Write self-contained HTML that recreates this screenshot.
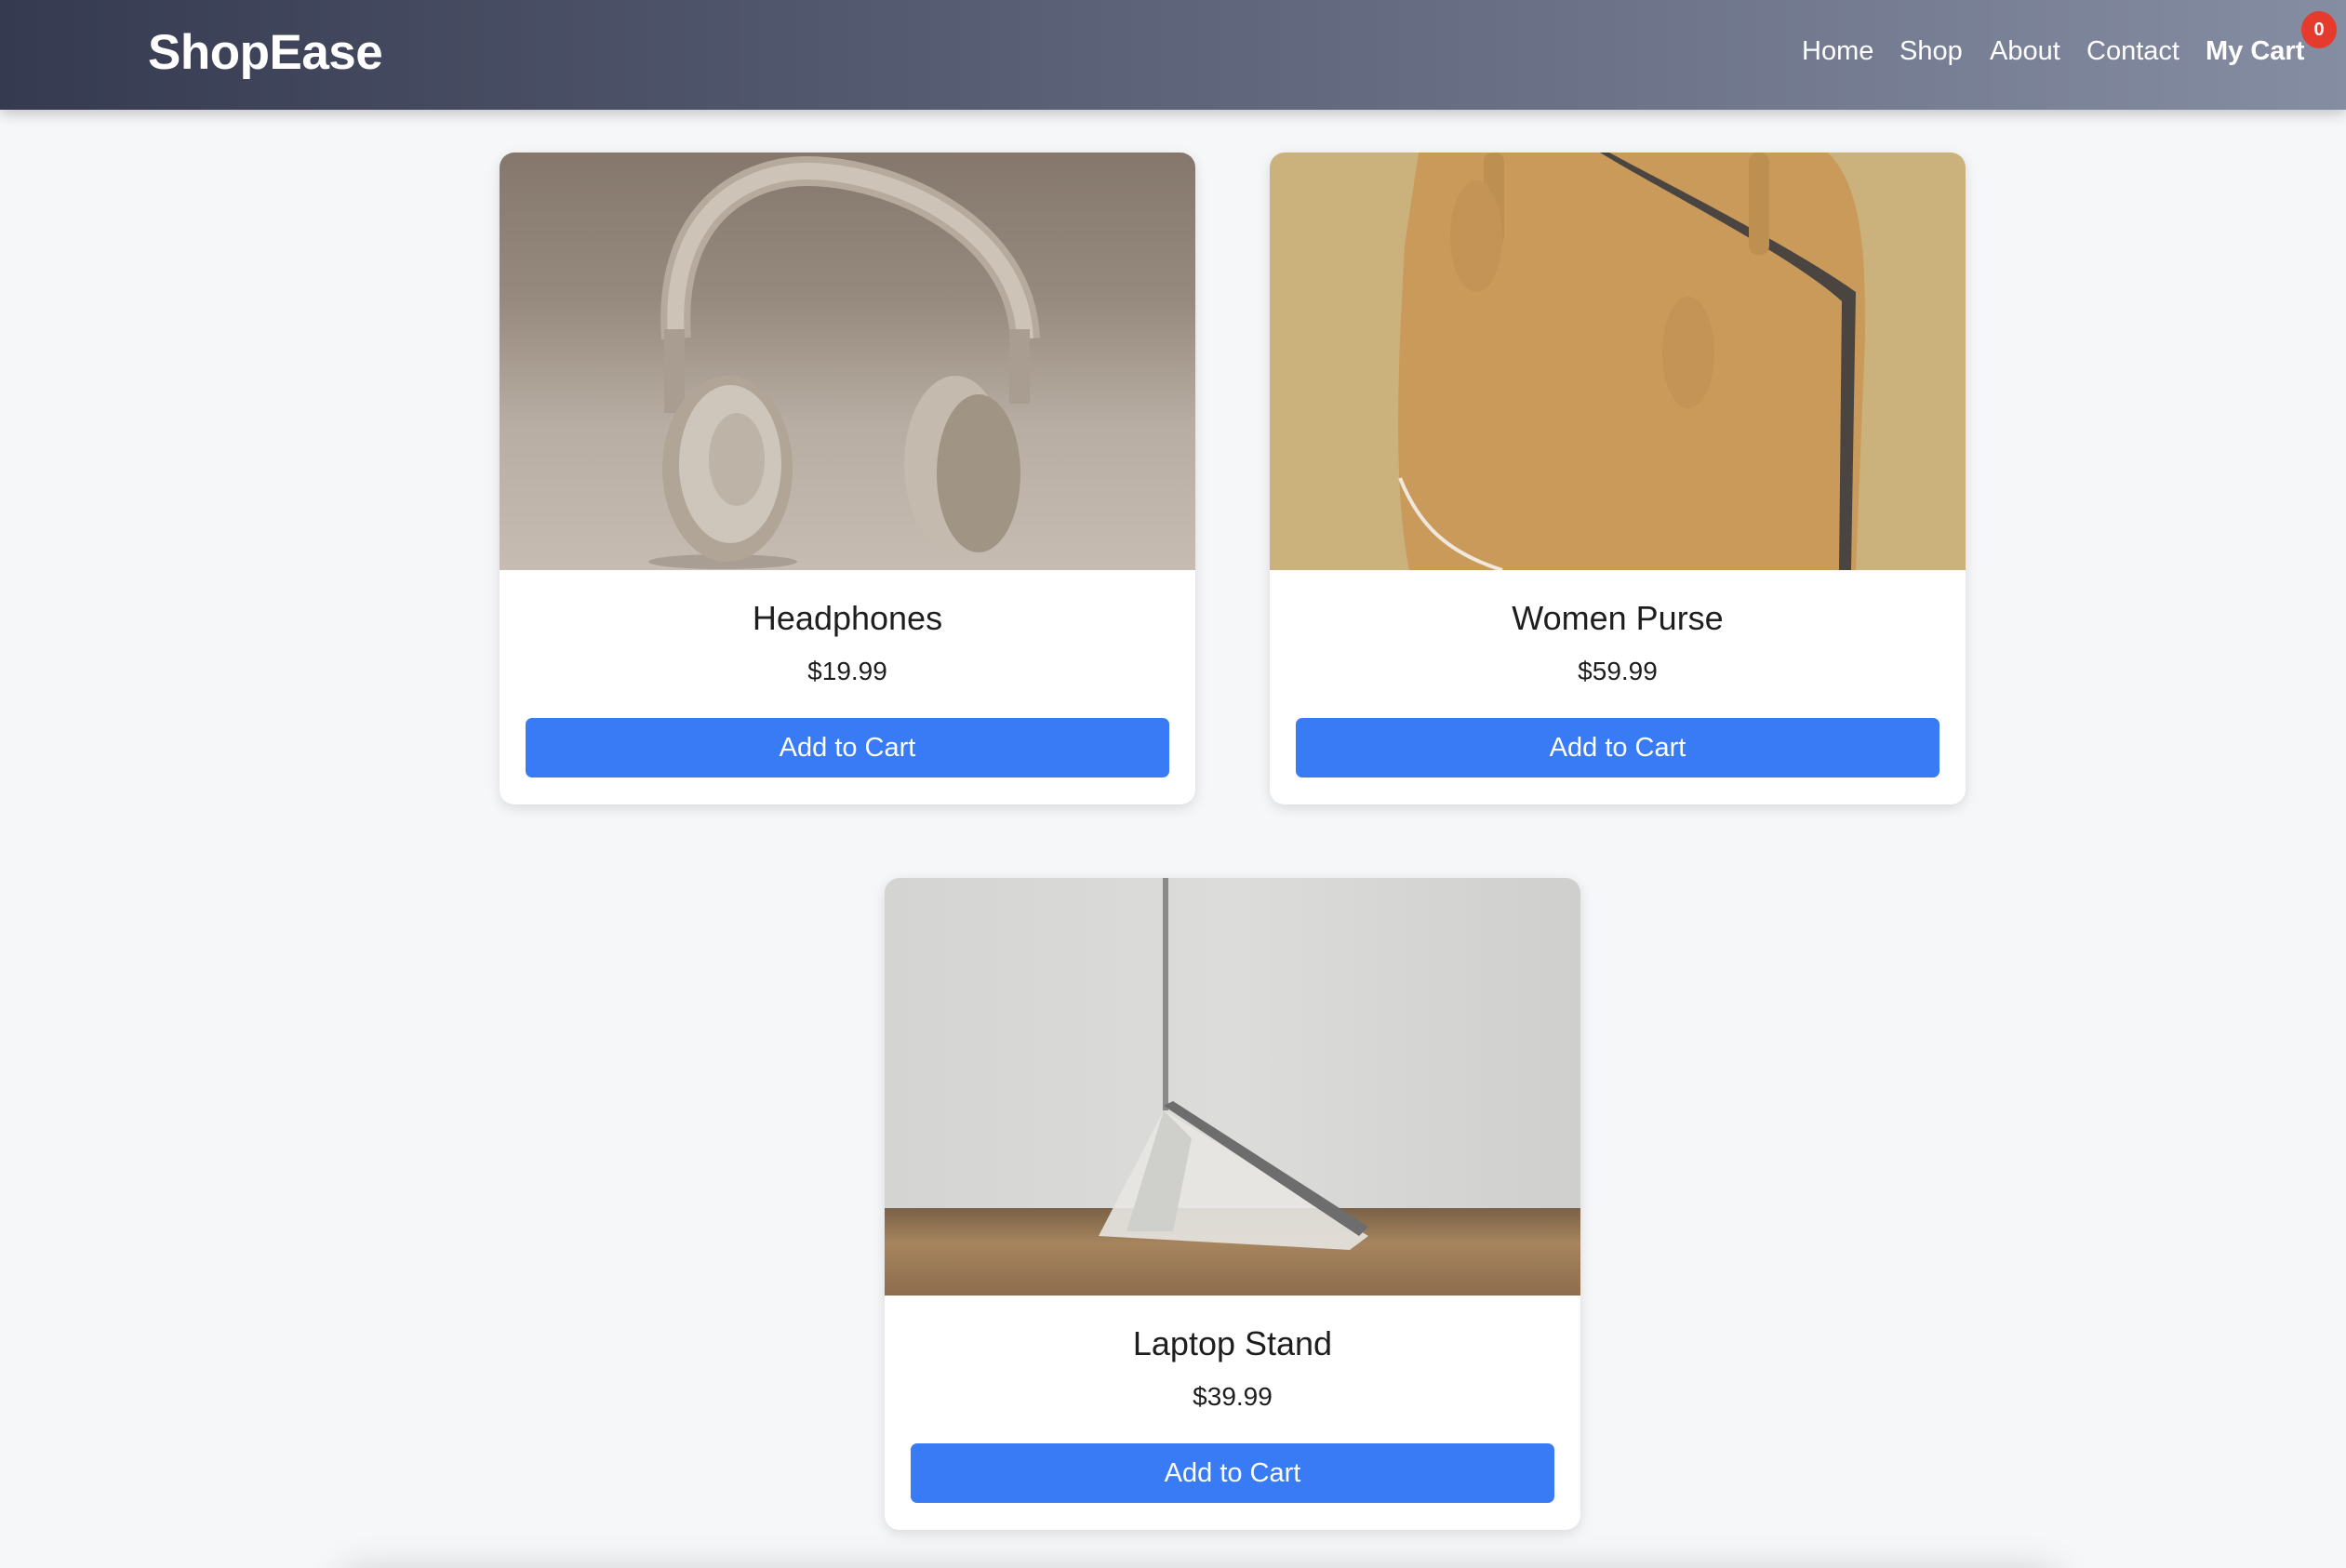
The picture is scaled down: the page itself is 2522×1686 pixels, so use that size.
<!DOCTYPE html>
<html><head><meta charset="utf-8"><style>
*{margin:0;padding:0;box-sizing:border-box}
html,body{width:2522px;height:1686px;overflow:hidden;background:#f6f7f9;font-family:"Liberation Sans",Arial,sans-serif}
#wrap{position:relative;width:2522px;height:1686px;overflow:hidden}
.hdr{position:absolute;left:0;top:0;width:2522px;height:118px;background:linear-gradient(90deg,#353a50,#5a6075 45%,#858da3);box-shadow:0 4px 14px rgba(0,0,0,.22);z-index:2}
.logo{position:absolute;left:159px;top:26px;color:#fff;font-weight:bold;font-size:53px;letter-spacing:-0.5px}
.nav{position:absolute;top:39px;color:#fff;font-size:29px}
.badge{position:absolute;left:2474px;top:12px;width:38px;height:40px;border-radius:50%;background:#e53b2c;color:#fff;font-size:20px;font-weight:bold;text-align:center;line-height:40px}
.card{position:absolute;width:748px;height:701px;background:#fff;border-radius:16px;box-shadow:0 4px 14px rgba(0,0,0,.12);overflow:hidden}
.img{height:449px;position:relative;overflow:hidden}
.t{position:absolute;top:480px;width:100%;text-align:center;font-size:36px;color:#1e1e1e}
.p{position:absolute;top:542px;width:100%;text-align:center;font-size:28px;color:#1e1e1e}
.b{position:absolute;left:28px;top:608px;width:692px;height:64px;background:#387bf5;border-radius:7px;color:#fff;font-size:29px;text-align:center;line-height:64px}
.foot{position:absolute;left:370px;top:1700px;width:1840px;height:60px;box-shadow:0 -10px 40px rgba(0,0,0,.18);background:#e4e5e7}
</style></head><body><div id="wrap">
<div class="hdr">
<div class="logo">ShopEase</div>
<div class="nav" style="left:1937px">Home</div>
<div class="nav" style="left:2042px">Shop</div>
<div class="nav" style="left:2139px">About</div>
<div class="nav" style="left:2243px">Contact</div>
<div class="nav" style="left:2371px;font-weight:bold">My Cart</div>
<div class="badge">0</div>
</div>

<div class="card" style="left:537px;top:164px">
<div class="img" style="background:linear-gradient(180deg,#85776b 0%,#968a7e 35%,#b8ada2 65%,#c6bcb2 100%)">
<svg width="748" height="449" viewBox="0 0 748 449">
<ellipse cx="240" cy="440" rx="80" ry="8" fill="#7f7468" opacity=".4"/>
<path d="M190 200 C180 60 270 20 330 20 C420 20 560 80 565 200" fill="none" stroke="#b5aa9c" stroke-width="32"/>
<path d="M190 200 C180 60 270 20 330 20 C420 20 560 80 565 200" fill="none" stroke="#cdc3b6" stroke-width="18"/>
<rect x="177" y="190" width="22" height="90" fill="#a89d90"/>
<rect x="548" y="190" width="22" height="80" fill="#a89d90"/>
<ellipse cx="245" cy="340" rx="70" ry="100" fill="#b0a597"/>
<ellipse cx="248" cy="335" rx="55" ry="85" fill="#cfc6bb"/>
<ellipse cx="255" cy="330" rx="30" ry="50" fill="#bdb3a6"/>
<ellipse cx="490" cy="335" rx="55" ry="95" fill="#c4baad"/>
<ellipse cx="515" cy="345" rx="45" ry="85" fill="#a09485"/>
</svg>
</div>
<div class="t">Headphones</div><div class="p">$19.99</div><div class="b">Add to Cart</div>
</div>

<div class="card" style="left:1365px;top:164px">
<div class="img" style="background:#cbb27c">
<svg width="748" height="449" viewBox="0 0 748 449">
<path d="M160 0 L600 0 C640 40 640 120 640 200 L630 449 L150 449 C130 350 140 200 145 100 Z" fill="#c99a5a"/>
<path d="M365 0 C420 30 560 100 630 150 L625 449 L612 449 L615 160 C560 110 420 40 355 0Z" fill="#4a4540"/>
<rect x="230" y="0" width="22" height="100" rx="10" fill="#bd8f50"/>
<rect x="515" y="0" width="22" height="110" rx="10" fill="#bd8f50"/>
<ellipse cx="222" cy="90" rx="28" ry="60" fill="#c39456"/>
<ellipse cx="450" cy="215" rx="28" ry="60" fill="#c39456"/>
<path d="M140 350 C160 400 190 430 250 449" stroke="#f0e8dc" stroke-width="4" fill="none"/>
</svg>
</div>
<div class="t">Women Purse</div><div class="p">$59.99</div><div class="b">Add to Cart</div>
</div>

<div class="card" style="left:951px;top:944px">
<div class="img" style="background:linear-gradient(90deg,#d4d4d2,#dcdcda 50%,#cfd0ce)">
<div style="position:absolute;left:0;top:355px;width:748px;height:94px;background:linear-gradient(180deg,#7a6148,#a6845e 40%,#8d6d4e)"></div>
<svg width="748" height="449" viewBox="0 0 748 449" style="position:absolute;left:0;top:0">
<path d="M300 250 L230 385 L500 400 L520 385 Z" fill="#e7e6e2" opacity=".9"/>
<path d="M300 250 L260 380 L310 380 L330 280 Z" fill="#cfcfcc"/>
<rect x="299" y="0" width="6" height="250" fill="#8a8a8a"/>
<path d="M300 245 L510 385 L520 375 L310 240 Z" fill="#6d6d6d"/>
</svg>
</div>
<div class="t">Laptop Stand</div><div class="p">$39.99</div><div class="b">Add to Cart</div>
</div>

<div class="foot"></div>
</div></body></html>
